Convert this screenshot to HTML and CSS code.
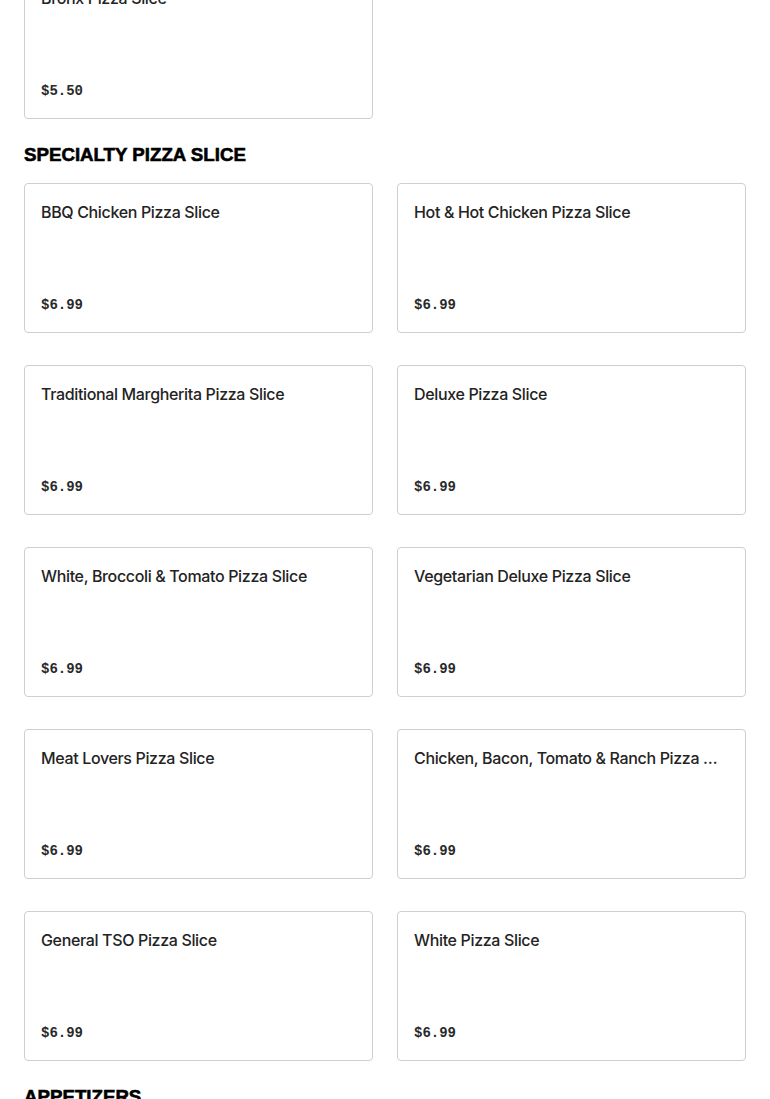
FILE: index.html
```html
<!DOCTYPE html>
<html>
<head>
<meta charset="utf-8">
<link rel="stylesheet" href="styles.css">
</head>
<body>
<div class="menu">
  <div class="grid first">
    <div class="card"><div class="title">Bronx Pizza Slice</div><div class="price">$5.50</div></div>
  </div>
  <h2 class="heading">SPECIALTY PIZZA SLICE</h2>
  <div class="grid">
    <div class="card"><div class="title">BBQ Chicken Pizza Slice</div><div class="price">$6.99</div></div>
    <div class="card"><div class="title">Hot &amp; Hot Chicken Pizza Slice</div><div class="price">$6.99</div></div>
    <div class="card"><div class="title">Traditional Margherita Pizza Slice</div><div class="price">$6.99</div></div>
    <div class="card"><div class="title">Deluxe Pizza Slice</div><div class="price">$6.99</div></div>
    <div class="card"><div class="title">White, Broccoli &amp; Tomato Pizza Slice</div><div class="price">$6.99</div></div>
    <div class="card"><div class="title">Vegetarian Deluxe Pizza Slice</div><div class="price">$6.99</div></div>
    <div class="card"><div class="title">Meat Lovers Pizza Slice</div><div class="price">$6.99</div></div>
    <div class="card"><div class="title">Chicken, Bacon, Tomato &amp; Ranch Pizza Slice</div><div class="price">$6.99</div></div>
    <div class="card"><div class="title">General TSO Pizza Slice</div><div class="price">$6.99</div></div>
    <div class="card"><div class="title">White Pizza Slice</div><div class="price">$6.99</div></div>
  </div>
  <h2 class="heading">APPETIZERS</h2>
</div>
</body>
</html>
```
FILE: styles.css
```css
html, body {
  margin: 0;
  padding: 0;
  background: #fff;
}
.menu {
  padding: 0 24px;
  font-family: "Inter", "Liberation Sans", sans-serif;
  color: #222;
}
.grid {
  display: grid;
  grid-template-columns: 1fr 1fr;
  column-gap: 24px;
  row-gap: 32px;
}
.grid.first {
  margin-top: -31px;
}
.card {
  box-sizing: border-box;
  height: 150px;
  border: 1px solid #cfcfcf;
  border-radius: 4px;
  padding: 16px 16px 15px;
  display: flex;
  flex-direction: column;
  justify-content: space-between;
  min-width: 0;
}
.title {
  font-size: 16px;
  line-height: 24px;
  font-weight: 500;
  letter-spacing: -0.35px;
  color: #232323;
  margin-right: 10px;
  white-space: nowrap;
  overflow: hidden;
  text-overflow: ellipsis;
}
.price {
  font-family: "Liberation Mono", "DejaVu Sans Mono", monospace;
  font-size: 14px;
  line-height: 24px;
  font-weight: bold;
  color: #2a2a2a;
}
.heading {
  margin: 24px 0 16px;
  font-family: "Liberation Sans", "Arial", sans-serif;
  font-weight: 900;
  font-size: 18.7px;
  line-height: 24px;
  -webkit-text-stroke: 0.6px #000;
  color: #000;
}
```
